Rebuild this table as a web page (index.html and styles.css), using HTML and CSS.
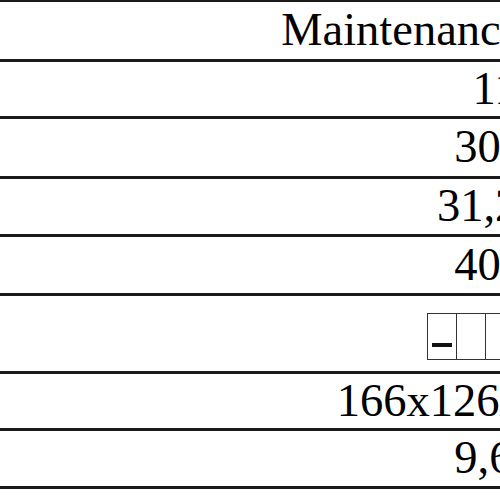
FILE: index.html
```html
<!DOCTYPE html>
<html>
<head>
<meta charset="utf-8">
<link rel="stylesheet" href="styles.css">
</head>
<body>
<div class="table">
  <div class="row r1"><div class="label"></div><div class="value head">Maintenance frequency</div></div>
  <div class="row r2"><div class="label"></div><div class="value">11</div></div>
  <div class="row r3"><div class="label"></div><div class="value">30,5</div></div>
  <div class="row r4"><div class="label"></div><div class="value">31,25&nbsp;</div></div>
  <div class="row r5"><div class="label"></div><div class="value">40,5</div></div>
  <div class="row r6"><div class="label"></div><div class="value">
    <div class="cells">
      <div class="cell"><span class="dash"></span></div>
      <div class="cell"></div>
      <div class="cell"></div>
      <div class="cell"></div>
      <div class="cell"></div>
    </div>
  </div></div>
  <div class="row r7"><div class="label"></div><div class="value">166x126x50 mm</div></div>
  <div class="row r8"><div class="label"></div><div class="value">9,65</div></div>
</div>
</body>
</html>
```
FILE: styles.css
```css
html, body {
  margin: 0;
  padding: 0;
  background: #ffffff;
  overflow: hidden;
}

.table {
  width: 740px;
  border-top: 2px solid #1a1a1a;
  font-family: "Liberation Serif", "Times New Roman", serif;
  font-size: 46.5px;
  color: #000000;
}

.row {
  display: grid;
  grid-template-columns: 250px 490px;
  border-bottom: 3px solid #1a1a1a;
}

.r1 { height: 57px; }
.r2 { height: 54px; }
.r3 { height: 57px; }
.r4 { height: 55px; }
.r5 { height: 56px; }
.r6 { height: 75px; }
.r7 { height: 54px; }
.r8 { height: 55px; }

.value {
  display: flex;
  align-items: center;
  justify-content: center;
  white-space: nowrap;
  line-height: 1;
}

.head {
  padding-left: 10px;
}

.cells {
  display: flex;
  margin-left: 10px;
  margin-top: 6px;
}

.cell {
  width: 30px;
  height: 47px;
  border: 1px solid #333333;
  margin-left: -1px;
  display: flex;
  align-items: flex-end;
  justify-content: center;
  padding-bottom: 12px;
  box-sizing: border-box;
}

.dash {
  display: block;
  width: 20px;
  height: 4px;
  background: #111111;
}
```
